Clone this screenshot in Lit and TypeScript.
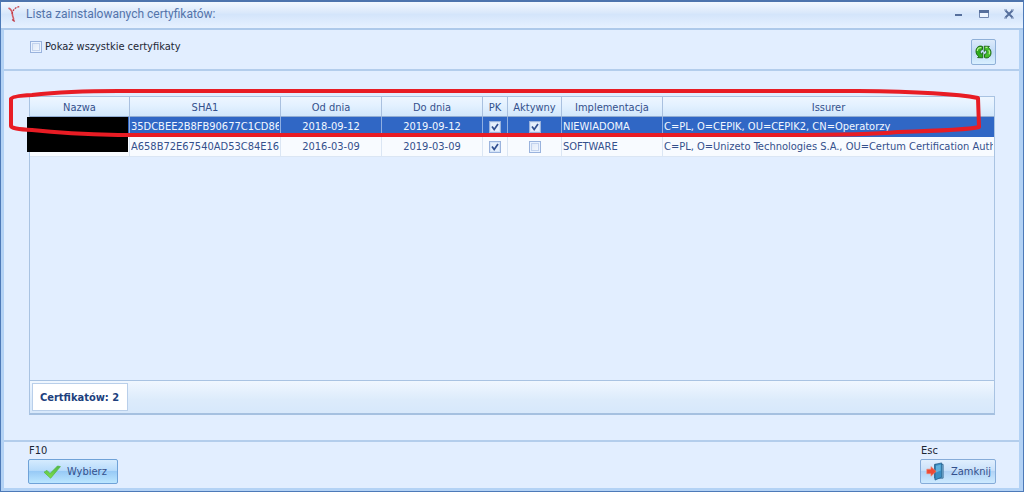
import { LitElement, html, css, svg } from "lit";
import { customElement, state } from "lit/decorators.js";

interface Certificate {
  sha1: string;
  from: string;
  to: string;
  pk: boolean;
  active: boolean;
  implementation: string;
  issuer: string;
}

const CERTIFICATES: Certificate[] = [
  {
    sha1: "35DCBEE2B8FB90677C1CD865",
    from: "2018-09-12",
    to: "2019-09-12",
    pk: true,
    active: true,
    implementation: "NIEWIADOMA",
    issuer: "C=PL, O=CEPIK, OU=CEPIK2, CN=Operatorzy",
  },
  {
    sha1: "A658B72E67540AD53C84E16D",
    from: "2016-03-09",
    to: "2019-03-09",
    pk: true,
    active: false,
    implementation: "SOFTWARE",
    issuer: "C=PL, O=Unizeto Technologies S.A., OU=Certum Certification Auth",
  },
];

const refreshIcon = svg`
  <svg width="17" height="14" viewBox="0 0 17 14" aria-hidden="true">
    <path d="M7.500 1.500C4 0 1 2.500 1 6.200c0 2.400 1 4 2.600 5.200L2.600 12.600l5.200.2V7.600L6.300 9C4.600 7.600 5 5 7.500 4.600z" fill="#2fae1e" stroke="#17600f" stroke-width=".9"/>
    <path d="M9.500 12.500c3.500 1.500 6.500-1 6.500-4.700 0-2.400-1-4-2.600-5.200l1-1.200-5.200-.2v5.200L10.700 5c1.700 1.400 1.300 4-1.200 4.400z" fill="#46bd2c" stroke="#17600f" stroke-width=".9"/>
    <path d="M2.300 6C2.400 3.500 4 2.300 6.400 2.600" fill="none" stroke="#b6f08e" stroke-width="1.200"/>
    <path d="M10.500 2.300l2 .1M13.800 5c1 1.400 1 3 .4 4.200" fill="none" stroke="#b6f08e" stroke-width="1.200"/>
  </svg>`;

const checkIcon = svg`
  <svg width="18" height="14" viewBox="0 0 18 14" aria-hidden="true">
    <defs>
      <linearGradient id="tick" x1="0" y1="0" x2="0" y2="1">
        <stop offset="0" stop-color="#4fb84a"/><stop offset="1" stop-color="#7fe04a"/>
      </linearGradient>
    </defs>
    <path d="M1 7.200l3-1.800L7 8.600 14.500 1l2.900.6L7.600 13.200z" fill="url(#tick)" stroke="#58b746" stroke-width=".8" stroke-linejoin="round"/>
  </svg>`;

const exitIcon = svg`
  <svg width="19" height="19" viewBox="0 0 20 20" aria-hidden="true">
    <path d="M9 2.500h9v14.500H9z" fill="#8cc4e4" stroke="#3c6f99"/>
    <path d="M9.500 2.500L16.500 1v15l-7 3z" fill="#3b8fc4" stroke="#235f8c" stroke-width=".8"/>
    <path d="M10.500 4l5-1v6l-5 2z" fill="#62b2dd"/>
    <path d="M.8 7.500h4.400V4.800l5.500 5.100-5.500 5.100v-2.700H.8z" fill="#ee4a35" stroke="#f08a70" stroke-width=".6"/>
  </svg>`;

@customElement("app-root")
export class AppRoot extends LitElement {
  @state() private selected = 0;

  static styles = css`
    :host {
      display: block;
      font-family: "DejaVu Sans Condensed", "Noto Sans", sans-serif;
      font-size: 11px;
      line-height: 16px;
      color: #1c2634;
    }
    * { box-sizing: border-box; }
    svg { display: block; flex: none; }
    .window {
      min-height: 100vh;
      display: flex;
      flex-direction: column;
      background: #e2eeff;
      border: 1px solid #4d7ab8;
      border-top: 2px solid #4d74ad;
    }
    .titlebar {
      height: 28px;
      flex: none;
      display: flex;
      align-items: center;
      gap: 4px;
      padding: 0 5px 2px 6px;
      background: linear-gradient(#f2f8ff, #dbe9fb 40%, #d4e5fb 48%, #e6f1ff);
      border-bottom: 2px solid #adc9ea;
    }
    .title {
      flex: 1;
      margin: 0;
      font: 400 12px/20px Roboto, "Noto Sans", sans-serif;
      color: #5474aa;
    }
    .controls { display: flex; gap: 6px; }
    .control {
      width: 19px;
      height: 16px;
      padding: 0;
      border: 0;
      background: none;
      display: grid;
      place-items: center;
    }
    .body {
      flex: 1;
      display: flex;
      flex-direction: column;
      border: solid #b3d2f5;
      border-width: 0 4px 3px 3px;
    }
    .toolbar {
      display: flex;
      justify-content: space-between;
      align-items: flex-start;
      height: 41px;
      padding: 9px 23px 0 26px;
      border-bottom: 2px solid #b3cdec;
    }
    .option { display: flex; align-items: center; gap: 3px; }
    .box {
      appearance: none;
      flex: none;
      width: 12px;
      height: 12px;
      margin: 0;
      border: 1px solid #9ab3dd;
      background: linear-gradient(135deg, #dbe6f7, #f8fbff);
      box-shadow: inset 0 0 0 1px #e9f2ff, inset 0 0 0 2px #c3d3ee;
    }
    .box:checked {
      background: url("data:image/svg+xml,%3Csvg xmlns='http://www.w3.org/2000/svg' viewBox='0 0 10 10'%3E%3Cpath d='M2 4.500l2.200 3L8 2' fill='none' stroke='%23304f91' stroke-width='1.700'/%3E%3C/svg%3E") center / 10px, #e6f0fc;
      box-shadow: inset 0 0 0 1px #d3e3f8;
    }
    .refresh {
      width: 25px;
      height: 26px;
      padding: 0;
      display: grid;
      place-items: center;
      border: 1px solid #8fb0d8;
      border-radius: 2px;
      background: linear-gradient(#dceafa, #c0daf6 50%, #d9f0ff);
    }
    .main {
      flex: 1;
      display: flex;
      padding: 25px 24px 25px 25px;
      border-bottom: 2px solid #b3cdec;
    }
    .grid {
      position: relative;
      flex: 1;
      min-width: 0;
      display: flex;
      flex-direction: column;
      border: 1px solid #a9c3e2;
      border-bottom: 2px solid #a5c0e0;
    }
    .rows { flex: 1; }
    table {
      width: 100%;
      table-layout: fixed;
      border-collapse: separate;
      border-spacing: 0;
      color: #34508c;
    }
    th {
      height: 20px;
      padding: 2px 0 0;
      font-weight: 400;
      text-align: center;
      background: linear-gradient(#eef6ff, #e3f1ff 45%, #d2e7fb);
      border-right: 1px solid #a9c0df;
      border-bottom: 1px solid #92add2;
    }
    td {
      height: 20px;
      padding: 0 1px;
      overflow: hidden;
      white-space: nowrap;
      background: #f8fbff;
      border-right: 1px solid #dbe6f4;
      border-bottom: 1px solid #dbe6f4;
    }
    th:last-child, td:last-child { border-right: 0; }
    td.center { text-align: center; padding: 0; }
    td.center .box { display: block; margin: 0 auto; }
    tr.selected td {
      background: #3067c5;
      color: #f2f7ff;
      border-color: #8fafe2;
      border-bottom-color: #3067c5;
    }
    .clip { overflow: hidden; }
    .name { width: 100px; }
    .sha { width: 151px; }
    .date, .impl { width: 101px; }
    .pk { width: 25px; }
    .active { width: 54px; }
    .summary {
      height: 33px;
      padding: 2px;
      display: flex;
      background: linear-gradient(#f0f7ff, #dcebfb 60%, #d7e8fb);
      border-top: 1px solid #a9c3e2;
    }
    .count {
      padding: 6px 8px 4px 7px;
      background: #fff;
      border: 1px solid #b9cfea;
      font-weight: 700;
      color: #203f7d;
      white-space: nowrap;
    }
    .redacted {
      position: absolute;
      left: -3px;
      top: 20px;
      width: 101px;
      height: 35px;
      background: #000;
    }
    .marker {
      position: absolute;
      left: -22px;
      top: -10px;
      width: calc(100% + 12px);
      height: 52px;
      pointer-events: none;
    }
    .actions {
      display: flex;
      justify-content: space-between;
      padding: 1px 23px 4px 24px;
    }
    .action { display: flex; flex-direction: column; }
    .action label { padding-left: 1px; }
    .push {
      height: 25px;
      display: flex;
      align-items: center;
      border: 1px solid #86acd9;
      border-radius: 2px;
      background: linear-gradient(#e0effe, #cae1fa 45%, #b2d3f6 50%, #cdeaff);
      font: inherit;
      color: #34508c;
    }
    .accept {
      gap: 6px;
      padding: 0 10px 0 14px;
      border-color: #6fa2d8;
      background: linear-gradient(#d5ebfe, #b8dcfb 45%, #98caf6 50%, #bce7ff);
    }
    .close { gap: 6px; padding: 0 4px 0 5px; }
  `;

  private row(c: Certificate, i: number) {
    return html`
      <tr class=${i === this.selected ? "selected" : ""} @click=${() => (this.selected = i)}>
        <td></td>
        <td><div class="clip">${c.sha1}</div></td>
        <td class="center">${c.from}</td>
        <td class="center">${c.to}</td>
        <td class="center"><input class="box" type="checkbox" aria-label="PK" .checked=${c.pk} /></td>
        <td class="center"><input class="box" type="checkbox" aria-label="Aktywny" .checked=${c.active} /></td>
        <td>${c.implementation}</td>
        <td><div class="clip">${c.issuer}</div></td>
      </tr>
    `;
  }

  render() {
    return html`
      <div class="window">
        <header class="titlebar">
          <svg width="15" height="18" viewBox="0 0 15 18" aria-hidden="true">
            <path d="M1.500 3c3 1.500 4 4 4 7 0 2 1.500 2 1 5.500" fill="none" stroke="#d25b63" stroke-width="1.600"/>
            <path d="M5 9C6 5 8 2.500 12.500 1.500" fill="none" stroke="#c23b46" stroke-width="1.200" stroke-dasharray="2 1"/>
            <path d="M5.200 14.500l2.500 2" stroke="#c23b46" stroke-width="1.500"/>
          </svg>
          <h1 class="title">Lista zainstalowanych certyfikatów:</h1>
          <div class="controls">
            <button class="control" aria-label="Minimalizuj">
              <svg width="10" height="10" viewBox="0 0 10 10"><path d="M1 6h7" stroke="#566f9c" stroke-width="2"/></svg>
            </button>
            <button class="control" aria-label="Maksymalizuj">
              <svg width="10" height="10" viewBox="0 0 10 10"><path d="M.5 1.500h9v7h-9z" fill="#edf5ff" stroke="#7187af"/><path d="M0 2.500h10" stroke="#566f9c" stroke-width="3"/></svg>
            </button>
            <button class="control" aria-label="Zamknij okno">
              <svg width="10" height="10" viewBox="0 0 10 10"><path d="M1.500 1.500l7 7m0-7l-7 7" stroke="#566f9c" stroke-width="2"/><path d="M0 1h3M7 1h3M0 9h3M7 9h3" stroke="#7187af"/></svg>
            </button>
          </div>
        </header>
        <div class="body">
          <div class="toolbar">
            <label class="option"><input class="box" type="checkbox" />Pokaż wszystkie certyfikaty</label>
            <button class="refresh" aria-label="Odśwież">${refreshIcon}</button>
          </div>
          <main class="main">
            <div class="grid">
              <div class="rows">
                <table>
                  <thead>
                    <tr>
                      <th class="name">Nazwa</th>
                      <th class="sha">SHA1</th>
                      <th class="date">Od dnia</th>
                      <th class="date">Do dnia</th>
                      <th class="pk">PK</th>
                      <th class="active">Aktywny</th>
                      <th class="impl">Implementacja</th>
                      <th>Issurer</th>
                    </tr>
                  </thead>
                  <tbody>${CERTIFICATES.map((c, i) => this.row(c, i))}</tbody>
                </table>
              </div>
              <div class="summary"><div class="count">Certfikatów: 2</div></div>
              <div class="redacted"></div>
              <svg class="marker" viewBox="0 0 976 52" preserveAspectRatio="none" aria-hidden="true">
                <path d="M3 12Q4 9 24 8Q60 4 110 4L850 4Q940 5 970 11L971 40Q960 43 890 45Q860 48 780 48L110 48Q60 47 24 43Q3 42 3 39Z"
                  fill="none" stroke="#e81c24" stroke-width="4" stroke-linejoin="round"/>
              </svg>
            </div>
          </main>
          <footer class="actions">
            <div class="action">
              <label for="accept">F10</label>
              <button class="push accept" id="accept">${checkIcon}Wybierz</button>
            </div>
            <div class="action">
              <label for="close">Esc</label>
              <button class="push close" id="close">${exitIcon}Zamknij</button>
            </div>
          </footer>
        </div>
      </div>
    `;
  }
}
